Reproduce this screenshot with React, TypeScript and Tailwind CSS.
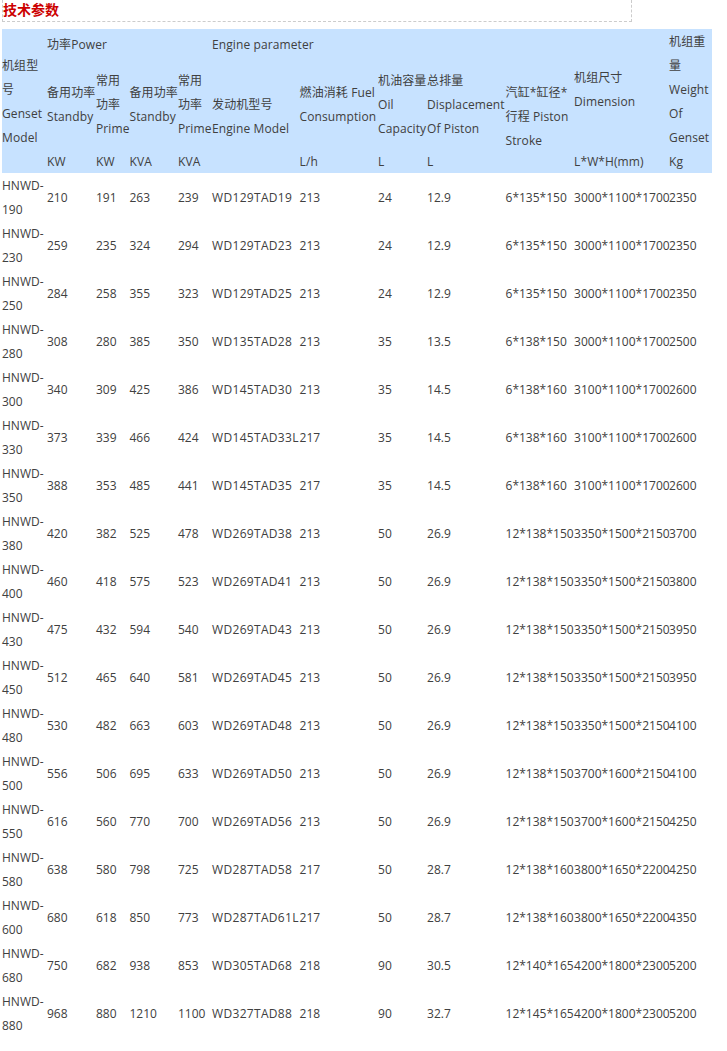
import type { ReactNode } from "react";

const rows: string[][] = [
  ["HNWD-190","210","191","263","239","WD129TAD19","213","24","12.9","6*135*150","3000*1100*1700","2350"],
  ["HNWD-230","259","235","324","294","WD129TAD23","213","24","12.9","6*135*150","3000*1100*1700","2350"],
  ["HNWD-250","284","258","355","323","WD129TAD25","213","24","12.9","6*135*150","3000*1100*1700","2350"],
  ["HNWD-280","308","280","385","350","WD135TAD28","213","35","13.5","6*138*150","3000*1100*1700","2500"],
  ["HNWD-300","340","309","425","386","WD145TAD30","213","35","14.5","6*138*160","3100*1100*1700","2600"],
  ["HNWD-330","373","339","466","424","WD145TAD33L","217","35","14.5","6*138*160","3100*1100*1700","2600"],
  ["HNWD-350","388","353","485","441","WD145TAD35","217","35","14.5","6*138*160","3100*1100*1700","2600"],
  ["HNWD-380","420","382","525","478","WD269TAD38","213","50","26.9","12*138*150","3350*1500*2150","3700"],
  ["HNWD-400","460","418","575","523","WD269TAD41","213","50","26.9","12*138*150","3350*1500*2150","3800"],
  ["HNWD-430","475","432","594","540","WD269TAD43","213","50","26.9","12*138*150","3350*1500*2150","3950"],
  ["HNWD-450","512","465","640","581","WD269TAD45","213","50","26.9","12*138*150","3350*1500*2150","3950"],
  ["HNWD-480","530","482","663","603","WD269TAD48","213","50","26.9","12*138*150","3350*1500*2150","4100"],
  ["HNWD-500","556","506","695","633","WD269TAD50","213","50","26.9","12*138*150","3700*1600*2150","4100"],
  ["HNWD-550","616","560","770","700","WD269TAD56","213","50","26.9","12*138*150","3700*1600*2150","4250"],
  ["HNWD-580","638","580","798","725","WD287TAD58","217","50","28.7","12*138*160","3800*1650*2200","4250"],
  ["HNWD-600","680","618","850","773","WD287TAD61L","217","50","28.7","12*138*160","3800*1650*2200","4350"],
  ["HNWD-680","750","682","938","853","WD305TAD68","218","90","30.5","12*140*165","4200*1800*2300","5200"],
  ["HNWD-880","968","880","1210","1100","WD327TAD88","218","90","32.7","12*145*165","4200*1800*2300","5200"],
];
const widths = [45,49,33.5,48.5,34,87.5,78.5,49,78.5,68.5,95,43];

function C({ children, rowSpan, colSpan, wide }: { children: ReactNode; rowSpan?: number; colSpan?: number; wide?: boolean }) {
  return (
    <td rowSpan={rowSpan} colSpan={colSpan}>
      <span className={wide ? "relative top-px tracking-[0.32px]" : "relative top-px"}>{children}</span>
    </td>
  );
}

export default function App() {
  return (
    <div className="pb-[14px] pl-[2px] text-[12px] leading-[24px] text-[#404040] [font-family:'Open_Sans','Noto_Sans_CJK_SC',sans-serif]">
      <div className="h-[22px] w-[630px] border-r border-b border-l border-dashed border-[#ccc]">
        <h3 className="text-[14px] leading-[20px] font-bold text-[#cc0000]">技术参数</h3>
      </div>
      <table className="mt-[7px] w-[710px] table-fixed border-collapse">
        <colgroup>
          {widths.map((w, i) => <col key={i} style={{ width: w }} />)}
        </colgroup>
        <thead className="bg-[#c7e2ff] font-normal tracking-[0.1px]">
          <tr className="h-[30px]">
            <C rowSpan={3}>机组型号 Genset Model</C>
            <C colSpan={4}>功率Power</C>
            <C colSpan={5}>Engine parameter</C>
            <C rowSpan={2}>机组尺寸 Dimension</C>
            <C rowSpan={3}>机组重量 Weight Of Genset Kg</C>
          </tr>
          <tr className="h-[90px]">
            <C>备用功率 Standby</C>
            <C>常用功率 Prime</C>
            <C>备用功率 Standby</C>
            <C>常用功率 Prime</C>
            <C rowSpan={2}>发动机型号 Engine Model</C>
            <C>燃油消耗 Fuel Consumption</C>
            <C>机油容量 Oil Capacity</C>
            <C>总排量 Displacement Of Piston</C>
            <C rowSpan={2}>汽缸*缸径*行程 Piston Stroke</C>
          </tr>
          <tr className="h-[24px]">
            <C>KW</C>
            <C>KW</C>
            <C>KVA</C>
            <C>KVA</C>
            <C>L/h</C>
            <C>L</C>
            <C>L</C>
            <C>L*W*H(mm)</C>
          </tr>
        </thead>
        <tbody>
          {rows.map((r) => (
            <tr key={r[0]} className="h-[48px]">
              {r.map((c, i) => <C key={i} wide={i === 5}>{c}</C>)}
            </tr>
          ))}
        </tbody>
      </table>
    </div>
  );
}
